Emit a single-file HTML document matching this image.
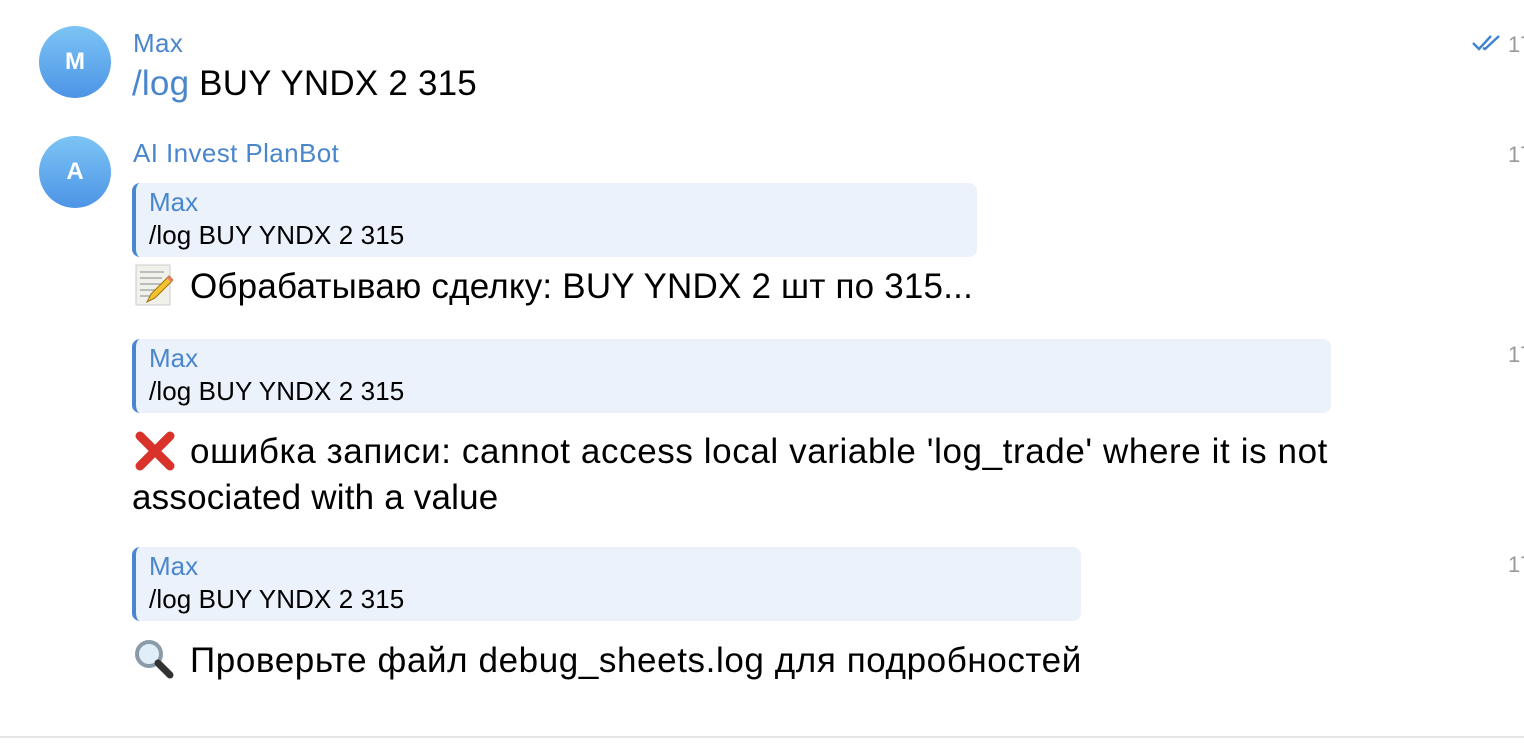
<!DOCTYPE html>
<html><head><meta charset="utf-8"><style>
body{margin:0;width:1524px;height:752px;background:#fff;position:relative;overflow:hidden;font-family:"Liberation Sans","DejaVu Sans",sans-serif;}
.a{position:absolute;white-space:nowrap;}
.av{position:absolute;left:39px;width:72px;height:72px;border-radius:50%;background:linear-gradient(#7cc4f4,#4d94e6);color:#fff;font-weight:bold;font-size:24px;text-align:center;line-height:72px;}
.nm{color:#4a86cc;font-size:26px;letter-spacing:0.4px;}
.big{font-size:35px;color:#000;letter-spacing:0.2px;}
.q{position:absolute;left:132px;height:74px;background:#ebf2fc;border-radius:8px;border-left:4px solid #4a86cc;box-sizing:border-box;}
.q .n{position:absolute;left:13px;top:4px;color:#4a86cc;font-size:26px;}
.q .t{position:absolute;left:13px;top:37px;color:#000;font-size:26px;letter-spacing:0.1px;}
.tm{position:absolute;left:1508px;color:#999;font-size:22px;}
</style></head><body>
<div class="av" style="top:26px">M</div>
<div class="a nm" style="left:133px;top:28px">Max</div>
<div class="a big" style="left:132px;top:64px"><span style="color:#4a86cc">/log</span> BUY YNDX 2 315</div>
<svg class="a" style="left:1472px;top:34px" width="30" height="18" viewBox="0 0 30 18"><path d="M1 9l6 6L19 2M11 14l2 1L27 2" fill="none" stroke="#3f82d1" stroke-width="2.4"/></svg>
<div class="tm" style="top:32px">17</div>

<div class="av" style="top:136px">A</div>
<div class="a nm" style="left:133px;top:138px">AI Invest PlanBot</div>
<div class="tm" style="top:142px">17</div>

<div class="q" style="top:183px;width:845px"><div class="a n">Max</div><div class="a t">/log BUY YNDX 2 315</div></div>
<svg class="a" style="left:135px;top:264px" width="38" height="42" viewBox="0 0 38 42"><rect x="1" y="1" width="34" height="40" fill="#f1f1ec" stroke="#ccc"/><g stroke="#888" stroke-width="1"><path d="M5 8h24M5 14h22M5 20h24M5 26h18M5 32h14"/></g><path d="M12 38l4-8 18-18 4 4-18 18z" fill="#f4c430" stroke="#a07010"/><path d="M32 14l4 4 2-2-4-4z" fill="#e77"/></svg>
<div class="a big" style="left:190px;top:267px">Обрабатываю сделку: BUY YNDX 2 шт по 315...</div>

<div class="tm" style="top:342px">17</div>
<div class="q" style="top:339px;width:1199px"><div class="a n">Max</div><div class="a t">/log BUY YNDX 2 315</div></div>
<svg class="a" style="left:134px;top:430px" width="42" height="42" viewBox="0 0 42 42"><path d="M6 6L36 36M36 6L6 36" stroke="#d9322a" stroke-width="9" stroke-linecap="round"/></svg>
<div class="a big" style="left:190px;top:432px;letter-spacing:0.6px">ошибка записи: cannot access local variable 'log_trade' where it is not</div>
<div class="a big" style="left:132px;top:478px">associated with a value</div>

<div class="tm" style="top:552px">17</div>
<div class="q" style="top:547px;width:949px"><div class="a n">Max</div><div class="a t">/log BUY YNDX 2 315</div></div>
<svg class="a" style="left:133px;top:638px" width="42" height="42" viewBox="0 0 42 42"><circle cx="16" cy="16" r="12" fill="#dfeef8" stroke="#8a9aa8" stroke-width="4"/><path d="M25 25l12 12" stroke="#333" stroke-width="7" stroke-linecap="round"/></svg>
<div class="a big" style="left:190px;top:641px;letter-spacing:0.6px">Проверьте файл debug_sheets.log для подробностей</div>

<div class="a" style="left:0;top:736px;width:1524px;height:2px;background:#e6e6e6"></div>
</body></html>
